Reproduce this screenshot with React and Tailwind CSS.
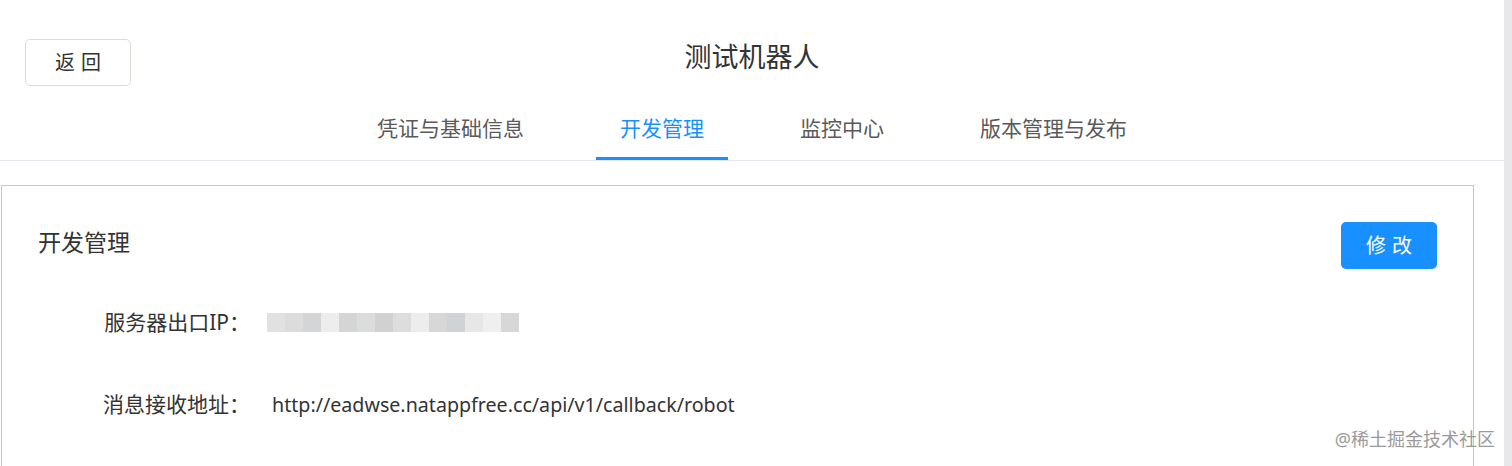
const tabs = ['凭证与基础信息', '开发管理', '监控中心', '版本管理与发布'];

// pixelated (mosaic) cells hiding the server IP
const mosaic = [
    'bg-[#e1e1e1]', 'bg-[#dcdcdc]', 'bg-[#d3d5d7]', 'bg-[#ededed]', 'bg-[#d5d5d5]',
    'bg-[#dbdddd]', 'bg-[#d1d1d1]', 'bg-[#dddddd]', 'bg-[#ededed]', 'bg-[#d7d7d7]',
    'bg-[#d0d3d6]', 'bg-[#e7e7e7]', 'bg-[#efefef]', 'bg-[#d7d7d7]',
];

const font = "font-['Noto_Sans','Noto_Sans_CJK_SC',sans-serif]";

const App = () => {
    const active = 1;

    return (
        <div className={`flex h-[466px] w-[1512px] overflow-hidden bg-white ${font}`}>
            <div className="w-[1504px] shrink-0 relative">
                {/* header */}
                <div className="border-b border-[#e4e7ed]">
                    <div className="grid grid-cols-[1fr_auto_1fr] pt-[39px]">
                        <div className="pl-[25px]">
                            <button
                                type="button"
                                className="w-[106px] h-[47px] border border-[#d9dbe0] rounded-[5px] text-[20px] text-[#333] bg-white tracking-[0.3em] pl-[0.3em]"
                            >
                                返回
                            </button>
                        </div>
                        <h1 className="text-[27px] leading-none text-[#333] mt-[4px]">测试机器人</h1>
                        <div />
                    </div>
                    <nav className="flex justify-center gap-[48px] mt-[14px]">
                        {tabs.map((label, i) => (
                            <div
                                key={label}
                                className={`px-[24px] h-[60px] flex items-center text-[21px] border-b-[3px] ${
                                    i === active ? 'text-[#1890ff] border-[#1890ff]' : 'text-[#5a5a5a] border-transparent'
                                }`}
                            >
                                {label}
                            </div>
                        ))}
                    </nav>
                </div>

                {/* card */}
                <div className="mt-[24px] ml-px w-[1473px] h-[400px] border border-[#c8c8c8] px-[36px] pt-[36px]">
                    <div className="flex items-start justify-between">
                        <h2 className="text-[23px] leading-none text-[#333] mt-[9px]">开发管理</h2>
                        <button
                            type="button"
                            className="w-[96px] h-[47px] rounded-[5px] bg-[#1890ff] text-white text-[20px] tracking-[0.3em] pl-[0.3em]"
                        >
                            修改
                        </button>
                    </div>

                    <div className="mt-[38px] flex items-center text-[21px] text-[#333]">
                        <span className="w-[212px] text-right">服务器出口IP：</span>
                        <div className="ml-[17px] flex h-[19px]">
                            {mosaic.map((c, i) => (
                                <span key={i} className={`w-[18px] h-full ${c}`} />
                            ))}
                        </div>
                    </div>

                    <div className="mt-[50px] flex items-center text-[21px] text-[#333]">
                        <span className="w-[212px] text-right">消息接收地址：</span>
                        <span className="ml-[22px] text-[19.65px]">http://eadwse.natappfree.cc/api/v1/callback/robot</span>
                    </div>
                </div>

                <span className="absolute right-[9px] top-[430px] text-[18px] text-[#9a9a9a] leading-none">
                    @稀土掘金技术社区
                </span>
            </div>
            <div className="flex-1 bg-[#e8e8ea]" />
        </div>
    );
};

export default App;
